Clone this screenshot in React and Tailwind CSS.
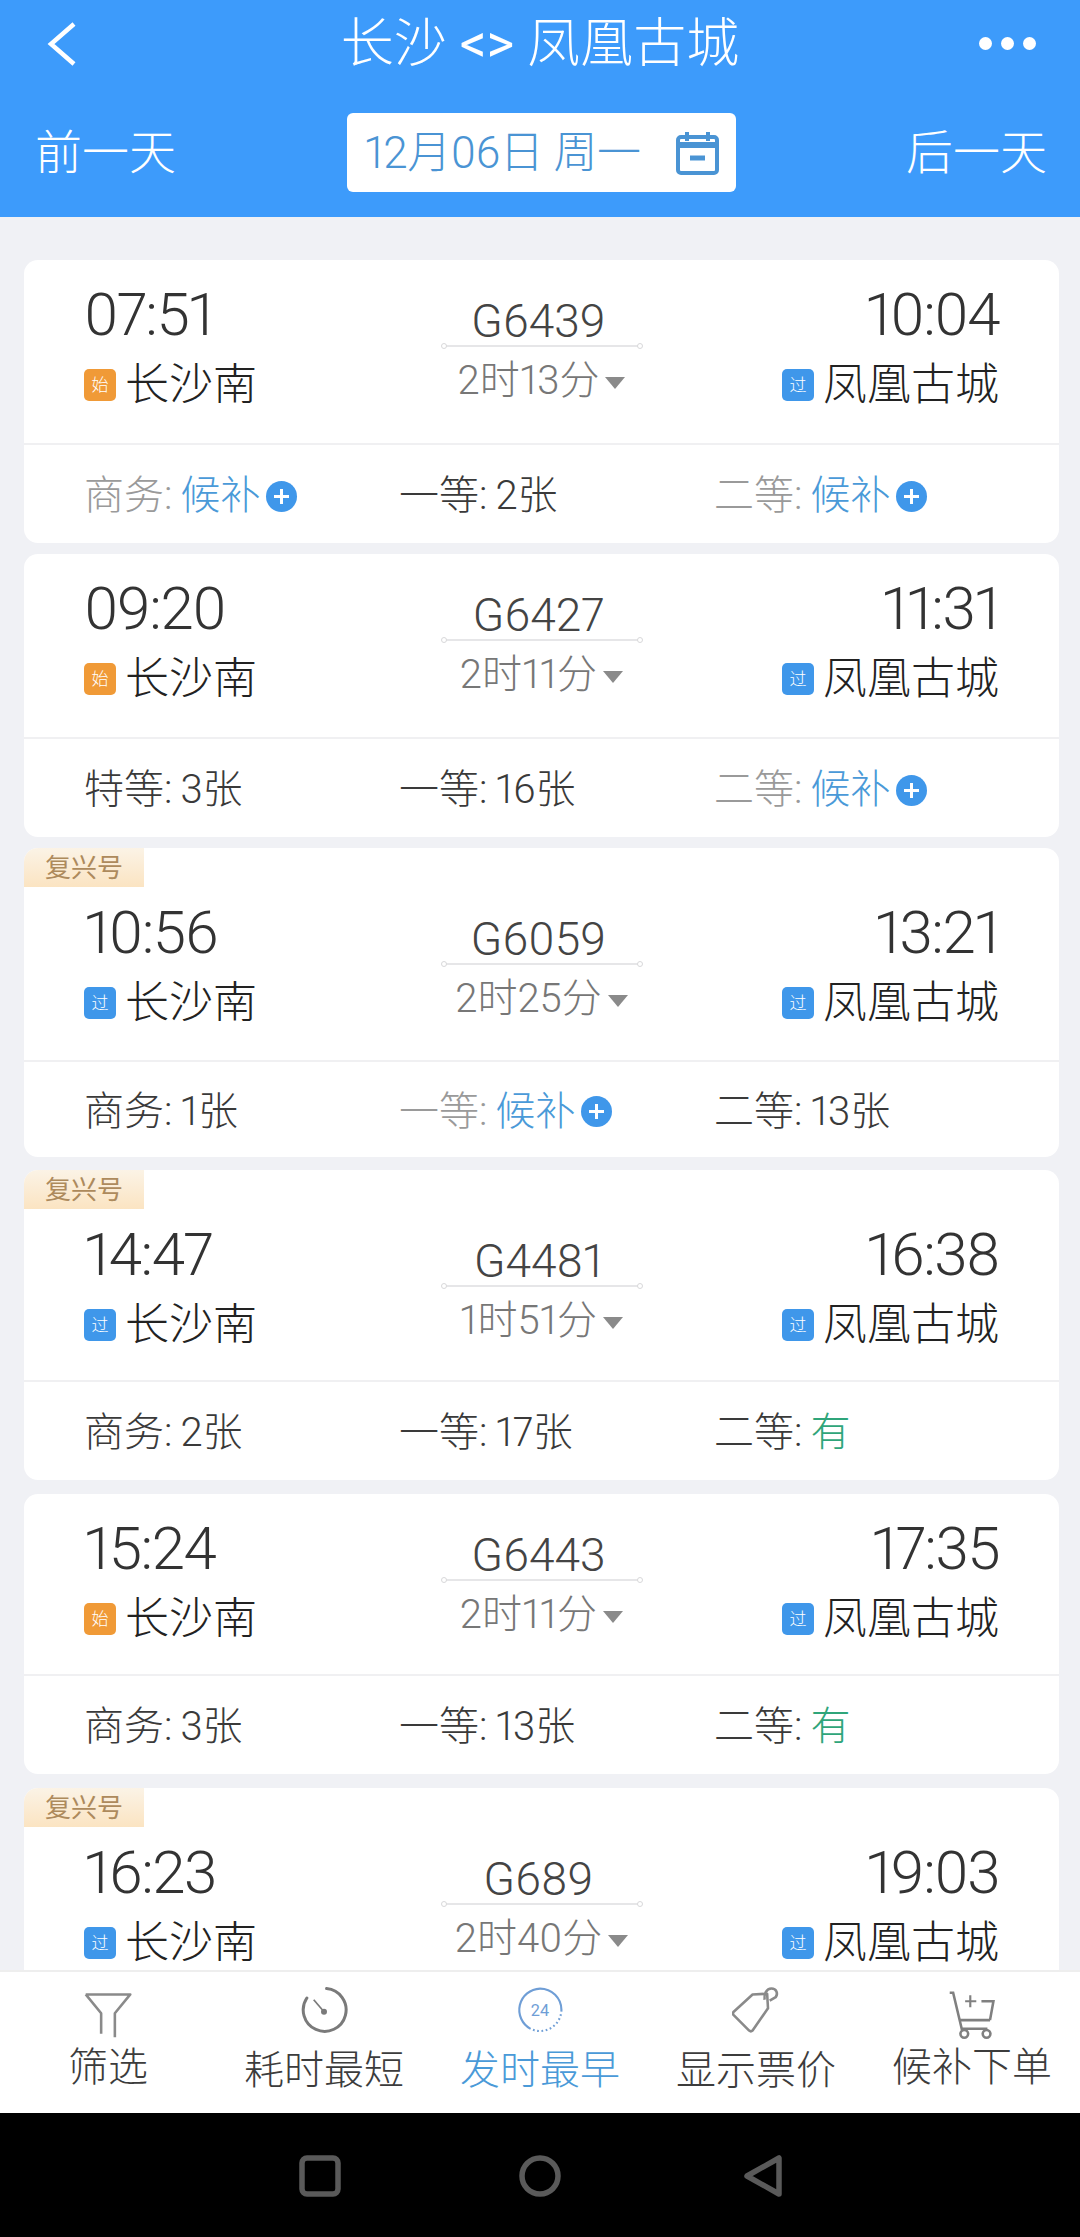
const trains = [
  { tag: false, from: '07:51', to: '10:04', no: 'G6439', dur: '2时13分', start: true, gap: 'mt-0', top: 'h-[185px]', bot: 'h-[98px]',
    seats: [['商务', '候补', 'wait'], ['一等', '2张', 'ok'], ['二等', '候补', 'wait']] },
  { tag: false, from: '09:20', to: '11:31', no: 'G6427', dur: '2时11分', start: true, gap: 'mt-[11px]', top: 'h-[185px]', bot: 'h-[98px]',
    seats: [['特等', '3张', 'ok'], ['一等', '16张', 'ok'], ['二等', '候补', 'wait']] },
  { tag: true, from: '10:56', to: '13:21', no: 'G6059', dur: '2时25分', start: false, gap: 'mt-[11px]', top: 'h-[175px]', bot: 'h-[95px]',
    seats: [['商务', '1张', 'ok'], ['一等', '候补', 'wait'], ['二等', '13张', 'ok']] },
  { tag: true, from: '14:47', to: '16:38', no: 'G4481', dur: '1时51分', start: false, gap: 'mt-[13px]', top: 'h-[173px]', bot: 'h-[98px]',
    seats: [['商务', '2张', 'ok'], ['一等', '17张', 'ok'], ['二等', '有', 'many']] },
  { tag: false, from: '15:24', to: '17:35', no: 'G6443', dur: '2时11分', start: true, gap: 'mt-[14px]', top: 'h-[182px]', bot: 'h-[98px]',
    seats: [['商务', '3张', 'ok'], ['一等', '13张', 'ok'], ['二等', '有', 'many']] },
  // last card runs under the toolbar, its seat row is never visible
  { tag: true, from: '16:23', to: '19:03', no: 'G689', dur: '2时40分', start: false, gap: 'mt-[14px]', top: 'h-[175px]', bot: 'h-[95px]',
    seats: [] },
]

function StationBadge({ start }) {
  return (
    <span className={`flex h-8 w-8 shrink-0 items-center justify-center rounded-[5px] text-[17px] leading-none text-white ${start ? 'bg-[#f09a37]' : 'bg-[#3f97ea]'}`}>
      {start ? '始' : '过'}
    </span>
  )
}

function PlusDot() {
  return (
    <span className="relative ml-[6px] h-[31px] w-[31px] shrink-0 rounded-full bg-[#3f97ea]">
      <span className="absolute left-[8px] top-[14px] h-[3px] w-[15px] bg-white" />
      <span className="absolute left-[14px] top-[8px] h-[15px] w-[3px] bg-white" />
    </span>
  )
}

function Seat({ name, value, kind }) {
  const wait = kind === 'wait'
  return (
    <div className="flex items-center text-[40px] leading-[48px] font-light">
      <span className={wait ? 'text-[#9a9a9a]' : 'text-[#3a3a3a]'}>{name}: </span>
      <span className={`ml-[8px] ${wait ? 'text-[#4a9ad8]' : kind === 'many' ? 'text-[#2fa57a]' : 'text-[#3a3a3a]'}`}>{value}</span>
      {wait && <PlusDot />}
    </div>
  )
}

function TrainCard({ t }) {
  return (
    <div className={`relative overflow-hidden rounded-[14px] bg-white ${t.gap}`}>
      {t.tag && (
        <div className="flex h-[39px] w-[120px] items-center justify-center bg-gradient-to-b from-[#fbf3e6] to-[#fbe4c2] text-[26px] leading-none text-[#ad8a5c]">
          复兴号
        </div>
      )}
      <div className={`border-b-2 border-[#f0f0f2] px-[60px] ${t.top} ${t.tag ? 'pt-[18px]' : 'pt-[27px]'}`}>
        <div className="grid grid-cols-[1fr_200px_1fr]">
          <div className="flex flex-col items-start">
            <div className="h-[56px] text-[60px] leading-[56px] font-light tracking-[-1.5px] text-[#333]">{t.from}</div>
            <div className="mt-[17px] flex items-center gap-[9px] text-[44px] leading-[50px] font-light text-[#222]">
              <StationBadge start={t.start} />
              长沙南
            </div>
          </div>
          <div className="flex flex-col items-center pt-[10px]">
            <div className="pr-[6px] text-[46px] leading-[48px] font-light text-[#444]">{t.no}</div>
            <div className="relative h-[2px] w-[200px] bg-[#e6e6e8]">
              <span className="absolute -left-[1px] -top-[2px] h-[6px] w-[6px] rounded-full border border-[#d8d8da] bg-white" />
              <span className="absolute -right-[1px] -top-[2px] h-[6px] w-[6px] rounded-full border border-[#d8d8da] bg-white" />
            </div>
            <div className="mt-[10px] flex items-center text-[40px] leading-[48px] font-light text-[#777]">
              {t.dur}
              <span className="ml-[6px] mt-[4px] h-0 w-0 border-x-[10px] border-t-[12px] border-x-transparent border-t-[#8a8a8a]" />
            </div>
          </div>
          <div className="flex flex-col items-end">
            <div className="h-[56px] text-[60px] leading-[56px] font-light tracking-[-1.5px] text-[#333]">{t.to}</div>
            <div className="mt-[17px] flex items-center gap-[9px] text-[44px] leading-[50px] font-light text-[#222]">
              <StationBadge start={false} />
              凤凰古城
            </div>
          </div>
        </div>
      </div>
      <div className={`grid grid-cols-[315px_315px_1fr] items-center pl-[60px] pt-[4px] ${t.bot}`}>
        {t.seats.map(s => <Seat key={s[0]} name={s[0]} value={s[1]} kind={s[2]} />)}
      </div>
    </div>
  )
}

function ToolItem({ label, active, children, up }) {
  return (
    <div className="flex w-[216px] flex-col items-center">
      <div className={`h-[48px] w-[48px] ${up ? 'mt-[5px]' : ''}`}>{children}</div>
      <div className={`text-[40px] font-light leading-[44px] ${up ? 'mt-[7px]' : 'mt-[15px]'} ${active ? 'text-[#4a9ad8]' : 'text-[#3c3c3c]'}`}>{label}</div>
    </div>
  )
}

export default function App() {
  return (
    <div className="flex h-[2237px] w-[1080px] flex-col overflow-hidden bg-[#f0f1f5] font-['Roboto','Noto_Sans_CJK_SC',sans-serif] proportional-nums">
      <header className="h-[217px] shrink-0 bg-[#3d9bfb] text-white">
        <div className="grid h-[87px] grid-cols-[1fr_auto_1fr] items-center pl-[46px] pr-[44px]">
          <svg width="32" height="44" viewBox="0 0 32 44" fill="none" stroke="white" strokeWidth="4.5">
            <path d="M28 2L5 22l23 20" />
          </svg>
          <div className="-translate-x-[1px] text-[53px] leading-[60px] font-light">长沙 <span className="font-normal">&lt;&gt;</span> 凤凰古城</div>
          <div className="flex justify-end gap-[9px]">
            <span className="h-[13px] w-[13px] rounded-full bg-white" />
            <span className="h-[13px] w-[13px] rounded-full bg-white" />
            <span className="h-[13px] w-[13px] rounded-full bg-white" />
          </div>
        </div>
        <div className="mt-[26px] flex items-center justify-between pl-[35px] pr-[33px]">
          <div className="text-[47px] leading-[56px] font-light">前一天</div>
          <div className="flex h-[79px] w-[389px] items-center justify-between rounded-[6px] bg-white pl-[18px] pr-[17px] text-[44px] leading-[52px] font-light tracking-[-0.5px] text-[#4a94d4]">
            <span>12月06日 周一</span>
            <svg width="43" height="44" viewBox="0 0 43 44" fill="none" stroke="#4a94d4" strokeWidth="4">
              <rect x="2" y="6" width="39" height="36" rx="3" />
              <path d="M2 14h39" strokeWidth="6" />
              <path d="M11 1v9M32 1v9" />
              <path d="M14 27h15" strokeWidth="5" />
            </svg>
          </div>
          <div className="text-[47px] leading-[56px] font-light">后一天</div>
        </div>
      </header>

      <main className="min-h-0 flex-1 overflow-hidden pl-[24px] pr-[21px] pt-[43px]">
        {trains.map(t => <TrainCard key={t.no} t={t} />)}
      </main>

      <nav className="flex h-[143px] shrink-0 items-start border-t-2 border-[#eeeeee] bg-white pt-[14px]">
        <ToolItem label="筛选" up>
          <svg viewBox="0 0 56 56" fill="none" stroke="#8a8a8a" strokeWidth="3">
            <path d="M2 4h52L36 26v28M20 50V26L2 4" strokeLinejoin="round" />
          </svg>
        </ToolItem>
        <ToolItem label="耗时最短">
          <svg viewBox="0 0 56 56" fill="none" stroke="#7a7a7a" strokeWidth="3.5">
            <path d="M31 3a25 25 0 1 1-23 11" strokeLinecap="round" />
            <path d="M16 16l12 14" strokeWidth="2" />
            <circle cx="28" cy="30" r="3.5" fill="#7a7a7a" stroke="none" />
          </svg>
        </ToolItem>
        <ToolItem label="发时最早" active>
          <svg viewBox="0 0 56 56" fill="none" stroke="#6f9ed6" strokeWidth="2.5">
            <path d="M28 3a25 25 0 0 1 25 25" />
            <path d="M28 3a25 25 0 0 0 -11 47" />
            <path d="M53 28a25 25 0 0 1-36 22" strokeDasharray="2 3" />
            <text x="28" y="35" textAnchor="middle" fontSize="19" fill="#6f9ed6" stroke="none">24</text>
          </svg>
        </ToolItem>
        <ToolItem label="显示票价">
          <svg viewBox="0 0 56 56" fill="none" stroke="#8a8a8a" strokeWidth="3" strokeLinejoin="round">
            <path d="M2 30L24 10l17-1 1 17-18 26a3 3 0 0 1-4 0L2 34a3 3 0 0 1 0-4z" />
            <path d="M38 16c-1-6 2-13 8-13s8 6 5 10l-7 4" />
          </svg>
        </ToolItem>
        <ToolItem label="候补下单" up>
          <svg viewBox="0 0 56 56" fill="none" stroke="#808080" strokeWidth="3">
            <path d="M2 2h4l10 42h30" />
            <path d="M13 34h36M39 12h14l-4 22" />
            <path d="M20 12h13M26 5v14" strokeWidth="2.5" />
            <circle cx="19" cy="50" r="4.5" />
            <circle cx="45" cy="50" r="4.5" />
          </svg>
        </ToolItem>
      </nav>

      <div className="flex h-[124px] shrink-0 items-center justify-center bg-black">
        <svg width="500" height="60" viewBox="0 0 500 60" fill="none" stroke="#5a5a5a" strokeWidth="5.5" strokeLinejoin="round">
          <rect x="12" y="13" width="36" height="36" rx="5" />
          <circle cx="250" cy="31" r="18" />
          <path d="M489 13v36L457 31z" />
        </svg>
      </div>
    </div>
  )
}
